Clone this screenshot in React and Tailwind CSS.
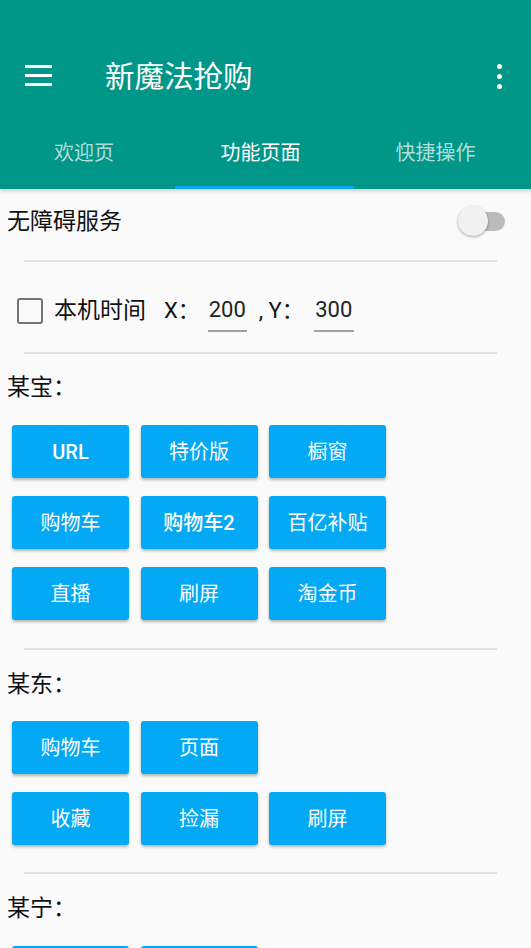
import React from "react";

const FONT = { fontFamily: 'Roboto, "Noto Sans CJK SC", sans-serif' };

function Btn({ children, bold }) {
  return (
    <div
      className={`w-[117px] h-[53px] rounded-[3px] bg-[#03a9f4] shadow-[0_2px_3px_rgba(0,0,0,0.28)] flex items-center justify-center text-white text-[20px] leading-none ${bold ? "font-medium" : ""}`}
    >
      {children}
    </div>
  );
}

function Divider({ className = "" }) {
  return <div className={`h-[2px] bg-[#e2e2e2] ml-[24px] mr-[34px] ${className}`} />;
}

function Label({ children, className = "" }) {
  return (
    <div className={`pl-[7px] text-[23px] leading-[28px] text-[#111] ${className}`}>{children}</div>
  );
}

export default function App() {
  return (
    <div className="w-[531px] h-[948px] overflow-hidden bg-[#fafafa]" style={FONT}>
      {/* Header */}
      <div className="bg-[#009688] relative z-10 shadow-[0_2px_4px_rgba(0,0,0,0.18)]">
        <div className="h-[35px]" />
        <div className="h-[83px] flex items-center">
          <div className="w-[25px]" />
          <div className="flex flex-col gap-[6px] w-[27px] -mt-[2px]">
            <div className="h-[3px] bg-white" />
            <div className="h-[3px] bg-white" />
            <div className="h-[3px] bg-white" />
          </div>
          <div className="ml-[53px] text-white text-[29.5px] leading-none pt-[2px]">新魔法抢购</div>
          <div className="ml-auto mr-[29px] flex flex-col gap-[5px] items-center">
            <div className="w-[5px] h-[5px] rounded-full bg-white" />
            <div className="w-[5px] h-[5px] rounded-full bg-white" />
            <div className="w-[5px] h-[5px] rounded-full bg-white" />
          </div>
        </div>
        <div className="h-[71px] grid grid-cols-3">
          <div className="flex items-center justify-center text-[20px] text-white/70 pb-[2px] pr-[9px]">欢迎页</div>
          <div className="flex flex-col">
            <div className="flex-1 flex items-center justify-center text-[20px] text-white pt-[1px] pr-[10px]">功能页面</div>
            <div className="h-[3px] bg-[#03a9f4] ml-[-2px]" />
          </div>
          <div className="flex items-center justify-center text-[20px] text-white/70 pb-[2px] pr-[14px]">快捷操作</div>
        </div>
      </div>

      {/* Content */}
      <div>
        <div className="h-[64px] flex items-center justify-between pl-[7px] pr-[26px]">
          <div className="text-[23px] text-[#111] leading-none">无障碍服务</div>
          <div className="relative w-[47px] h-[30px] flex items-center">
            <div className="absolute right-0 w-[45px] h-[19px] rounded-full bg-[#bcbcbc]" />
            <div className="absolute left-0 w-[30px] h-[30px] rounded-full bg-[#f1f1f1] shadow-[0_1px_3px_rgba(0,0,0,0.35)]" />
          </div>
        </div>
        <Divider className="mt-[7px]" />
        <div className="h-[90px] pt-[7px] flex items-center text-[#111]">
          <div className="ml-[17px] w-[26px] h-[26px] border-[2.5px] border-[#737373] rounded-[3px]" />
          <div className="ml-[11px] text-[23px] leading-none">本机时间</div>
          <div className="ml-[18px] text-[22px] leading-none">X：</div>
          <div className="ml-[8px] w-[39px] flex flex-col items-center">
            <div className="text-[22px] leading-none text-[#222] pt-[9px]">200</div>
            <div className="w-full h-[2px] bg-[#a0a0a0] mt-[9px]" />
          </div>
          <div className="ml-[12px] text-[22px] leading-none">, Y：</div>
          <div className="ml-[10px] w-[40px] flex flex-col items-center">
            <div className="text-[22px] leading-none text-[#222] pt-[9px]">300</div>
            <div className="w-full h-[2px] bg-[#a0a0a0] mt-[9px]" />
          </div>
        </div>
        <Divider />

        <Label className="mt-[20px]">某宝：</Label>
        <div className="mt-[23px] ml-[12px] grid grid-cols-[117px_117px_117px] gap-x-[11.5px] gap-y-[18px]">
          <Btn bold>URL</Btn>
          <Btn>特价版</Btn>
          <Btn>橱窗</Btn>
          <Btn>购物车</Btn>
          <Btn bold>购物车2</Btn>
          <Btn>百亿补贴</Btn>
          <Btn>直播</Btn>
          <Btn>刷屏</Btn>
          <Btn>淘金币</Btn>
        </div>
        <Divider className="mt-[28px]" />

        <Label className="mt-[21px]">某东：</Label>
        <div className="mt-[22px] ml-[12px] grid grid-cols-[117px_117px_117px] gap-x-[11.5px] gap-y-[18px]">
          <Btn>购物车</Btn>
          <Btn>页面</Btn>
          <div />
          <Btn>收藏</Btn>
          <Btn>捡漏</Btn>
          <Btn>刷屏</Btn>
        </div>
        <Divider className="mt-[27px]" />

        <Label className="mt-[21px]">某宁：</Label>
        <div className="mt-[23px] ml-[12px] grid grid-cols-[117px_117px_117px] gap-x-[11.5px] gap-y-[18px]">
          <Btn>购物车</Btn>
          <Btn>页面</Btn>
        </div>
      </div>
    </div>
  );
}
